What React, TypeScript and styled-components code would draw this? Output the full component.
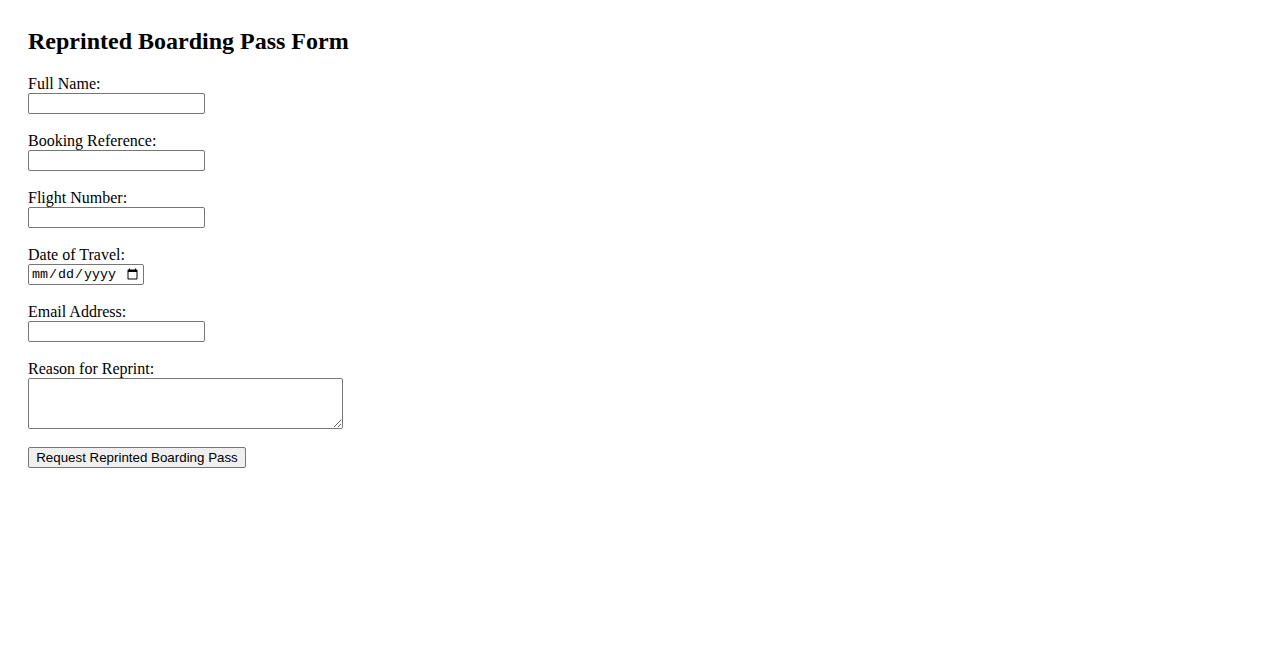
import React from "react";
import styled, { createGlobalStyle } from "styled-components";

const GlobalStyle = createGlobalStyle`
  html, body { margin: 0; padding: 0; background: #ffffff; }
  body {
    padding: 28px;
    font-family: "Liberation Serif", "Times New Roman", serif;
    font-size: 16px;
    color: #000000;
  }
`;

const Title = styled.h2`
  margin: 0 0 20px 0;
  font-size: 24px;
  font-weight: bold;
  font-family: "Liberation Serif", "Times New Roman", serif;
`;

const Form = styled.form`
  display: flex;
  flex-direction: column;
  align-items: flex-start;
`;

const Field = styled.div`
  display: flex;
  flex-direction: column;
  align-items: flex-start;
  margin-bottom: 18px;
`;

const Label = styled.label`
  display: block;
  height: 18px;
  line-height: 18px;
`;

const TextInput = styled.input<{ $w?: number }>`
  display: block;
  box-sizing: border-box;
  width: ${(p) => p.$w ?? 177}px;
  height: 21px;
  margin: 0;
  padding: 1px 2px;
  font-family: "Liberation Sans", Arial, sans-serif;
  font-size: 13.333px;
  border: 1px solid #767676;
  border-radius: 2px;
  background: #ffffff;
`;

const DateInput = styled.input`
  display: block;
  box-sizing: border-box;
  width: 116px;
  height: 21px;
  margin: 0;
  padding: 1px 2px;
  font-family: "Liberation Mono", "Courier New", monospace;
  font-size: 13.333px;
  border: 1px solid #767676;
  border-radius: 2px;
  background: #ffffff;
  color: #000;
`;

const TextArea = styled.textarea`
  display: block;
  box-sizing: border-box;
  width: 315px;
  height: 51px;
  margin: 0;
  padding: 2px;
  font-family: "Liberation Mono", monospace;
  font-size: 13.333px;
  border: 1px solid #767676;
  border-radius: 2px;
`;

const Button = styled.button`
  box-sizing: border-box;
  height: 21px;
  width: 218px;
  margin: 0;
  padding: 1px 6px;
  font-family: "Liberation Sans", Arial, sans-serif;
  font-size: 13.333px;
  color: #000;
  background: #efefef;
  border: 1px solid #767676;
  border-radius: 2px;
  line-height: normal;
`;

const fields: { id: string; label: string; type: string }[] = [
  { id: "fullName", label: "Full Name:", type: "text" },
  { id: "booking", label: "Booking Reference:", type: "text" },
  { id: "flight", label: "Flight Number:", type: "text" },
  { id: "date", label: "Date of Travel:", type: "date" },
  { id: "email", label: "Email Address:", type: "email" },
];

export default function App() {
  return (
    <>
      <GlobalStyle />
      <Title>Reprinted Boarding Pass Form</Title>
      <Form onSubmit={(e) => e.preventDefault()}>
        {fields.map((f) => (
          <Field key={f.id}>
            <Label htmlFor={f.id}>{f.label}</Label>
            {f.type === "date" ? (
              <DateInput id={f.id} type="date" />
            ) : (
              <TextInput id={f.id} type={f.type} />
            )}
          </Field>
        ))}
        <Field>
          <Label htmlFor="reason">Reason for Reprint:</Label>
          <TextArea id="reason" />
        </Field>
        <Button type="submit">Request Reprinted Boarding Pass</Button>
      </Form>
    </>
  );
}
